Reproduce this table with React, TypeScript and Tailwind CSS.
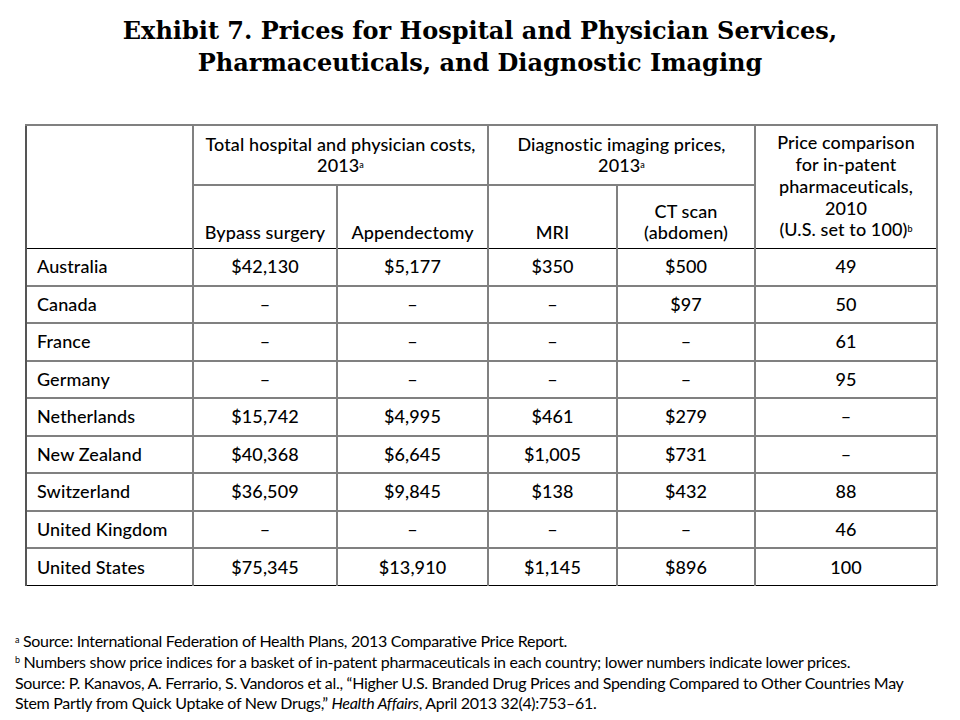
const rows: [string, string, string, string, string, string][] = [
  ["Australia", "$42,130", "$5,177", "$350", "$500", "49"],
  ["Canada", "–", "–", "–", "$97", "50"],
  ["France", "–", "–", "–", "–", "61"],
  ["Germany", "–", "–", "–", "–", "95"],
  ["Netherlands", "$15,742", "$4,995", "$461", "$279", "–"],
  ["New Zealand", "$40,368", "$6,645", "$1,005", "$731", "–"],
  ["Switzerland", "$36,509", "$9,845", "$138", "$432", "88"],
  ["United Kingdom", "–", "–", "–", "–", "46"],
  ["United States", "$75,345", "$13,910", "$1,145", "$896", "100"],
];

export default function App() {
  return (
    <div className="flex h-[720px] w-[960px] flex-col bg-white text-black">
      <h1 className="pt-[15px] text-center font-['DejaVu_Serif',serif] text-[24px] font-bold leading-[32px] tracking-[0px]">
        Exhibit 7. Prices for Hospital and Physician Services,
        <br />
        Pharmaceuticals, and Diagnostic Imaging
      </h1>

      <table className="ml-[25px] mt-[45px] w-[911px] table-fixed border-collapse font-['Lato',sans-serif] text-[18px] font-medium tracking-[0.1px]">
        <colgroup>
          <col className="w-[167px]" />
          <col className="w-[144px]" />
          <col className="w-[151px]" />
          <col className="w-[129px]" />
          <col className="w-[138px]" />
          <col className="w-[182px]" />
        </colgroup>
        <thead className="leading-[21px]">
          <tr className="h-[60px]">
            <th
              rowSpan={2}
              className="border-t-2 border-l-2 border-r-2 border-t-[#808080] border-l-[#555] border-r-[#808080]"
            />
            <th
              colSpan={2}
              className="border-t-2 border-r-2 border-b-2 border-[#808080] px-1 text-center align-middle font-medium"
            >
              Total hospital and physician costs,
              <br />
              2013<sup className="text-[9px]">a</sup>
            </th>
            <th
              colSpan={2}
              className="border-t-2 border-r-2 border-b-2 border-[#808080] px-1 text-center align-middle font-medium"
            >
              Diagnostic imaging prices,
              <br />
              2013<sup className="text-[9px]">a</sup>
            </th>
            <th
              rowSpan={2}
              className="border-t-2 border-r-2 border-[#808080] px-1 text-center align-middle font-medium leading-[21.7px]"
            >
              Price comparison
              <br />
              for in-patent
              <br />
              pharmaceuticals,
              <br />
              2010
              <br />
              (U.S. set to 100)<sup className="text-[9px]">b</sup>
            </th>
          </tr>
          <tr className="h-[63px] border-b border-b-black">
            <th className="border-r-2 border-[#808080] pb-[5px] text-center align-bottom font-medium">
              Bypass surgery
            </th>
            <th className="border-r-2 border-[#808080] pb-[5px] text-center align-bottom font-medium">
              Appendectomy
            </th>
            <th className="border-r-2 border-[#808080] pb-[5px] text-center align-bottom font-medium">
              MRI
            </th>
            <th className="border-r-2 border-[#808080] pb-[5px] text-center align-bottom font-medium">
              CT scan
              <br />
              (abdomen)
            </th>
          </tr>
        </thead>
        <tbody>
          {rows.map((r, i) => (
            <tr
              key={r[0]}
              className={
                i === rows.length - 1
                  ? "h-[37.5px] border-b border-b-black"
                  : "h-[37.5px] border-b-2 border-b-[#808080]"
              }
            >
              <td className="border-l-2 border-r-2 border-l-[#555] border-r-[#808080] pl-[10px]">
                {r[0]}
              </td>
              {r.slice(1).map((v, j) => (
                <td key={j} className="border-r-2 border-[#808080] text-center">
                  {v}
                </td>
              ))}
            </tr>
          ))}
        </tbody>
      </table>

      <div className="mt-auto pb-[6px] pl-[15px] font-['Lato',sans-serif] text-[16px] leading-[20.7px] tracking-[-0.3px]">
        <p>
          <sup className="text-[9px]">a</sup> Source: International Federation of Health Plans, 2013 Comparative Price
          Report.
        </p>
        <p>
          <sup className="text-[9px]">b</sup> Numbers show price indices for a basket of in-patent pharmaceuticals in
          each country; lower numbers indicate lower prices.
        </p>
        <p className="w-[895px]">
          Source: P. Kanavos, A. Ferrario, S. Vandoros et al., “Higher U.S. Branded Drug Prices and Spending
          Compared to Other Countries May Stem Partly from Quick Uptake of New Drugs,” <i>Health Affairs</i>, April
          2013 32(4):753–61.
        </p>
      </div>
    </div>
  );
}
